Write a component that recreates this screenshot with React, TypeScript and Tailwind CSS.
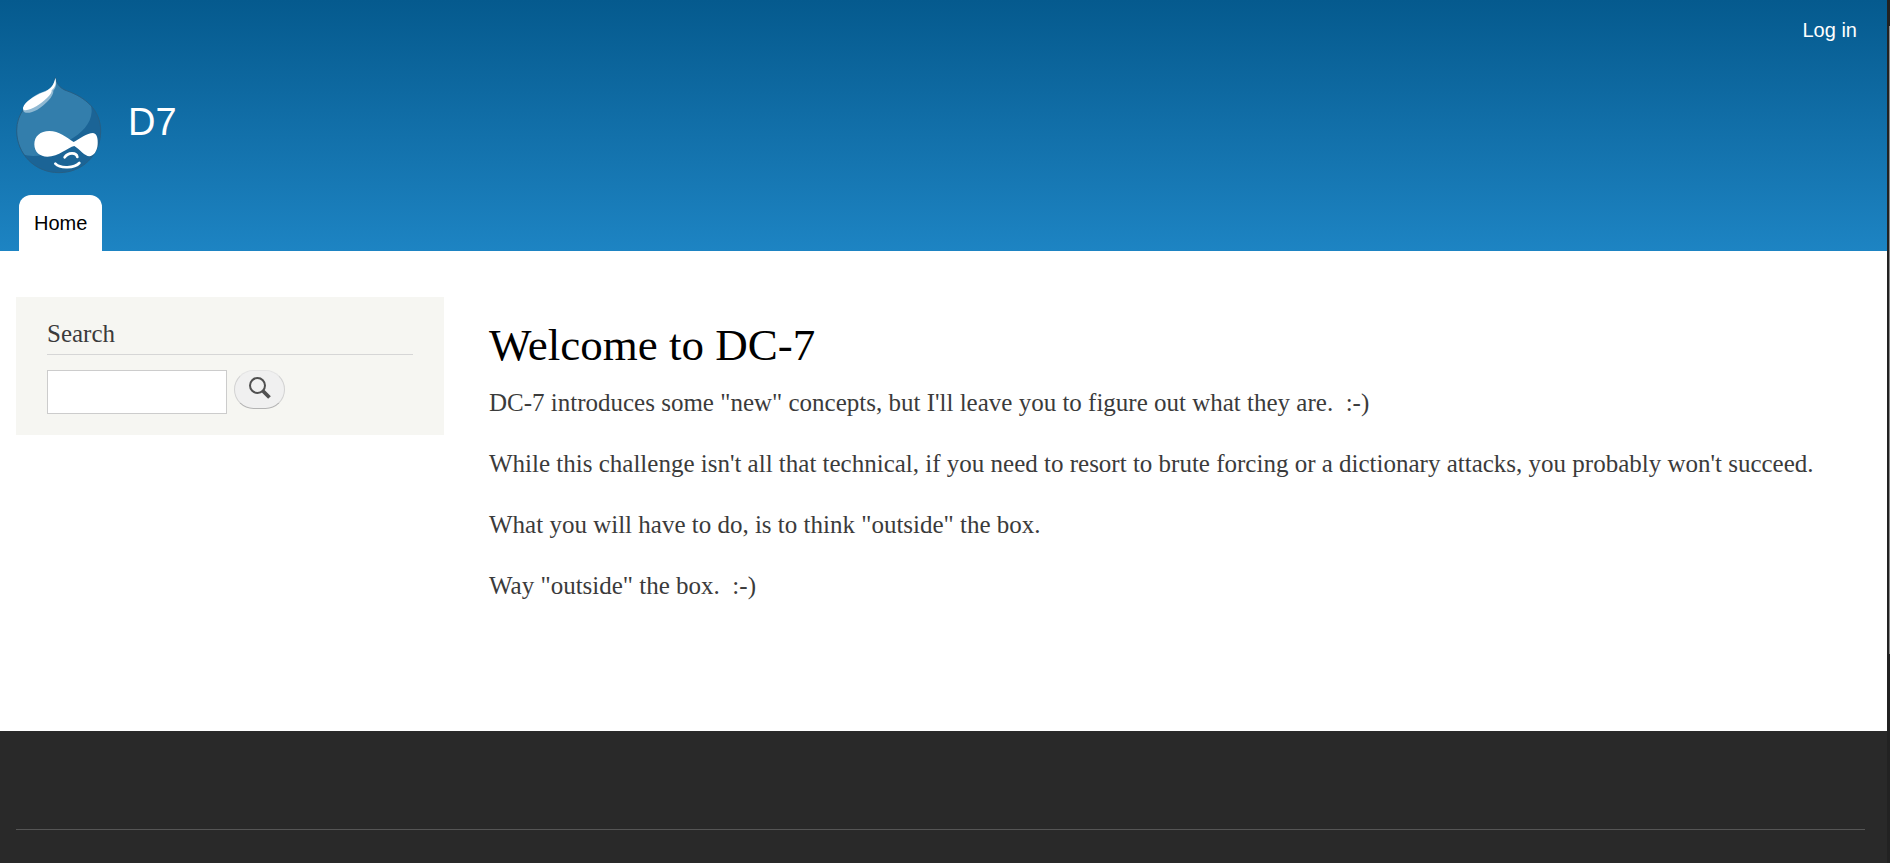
import React from "react";

const paragraphs = [
  "DC-7 introduces some \"new\" concepts, but I'll leave you to figure out what they are.\u00a0 :-)",
  "While this challenge isn't all that technical, if you need to resort to brute forcing or a dictionary attacks, you probably won't succeed.",
  "What you will have to do, is to think \"outside\" the box.",
  "Way \"outside\" the box.\u00a0 :-)",
];

function Logo() {
  return (
    <svg viewBox="18 9 258 291" className="h-[97px] w-[86px]" aria-hidden="true">
      <defs>
        <clipPath id="drop">
          <path d="M136 11C141 32 152 44 172 51C226 70 272 108 272 171C272 244 216 296 147 296C75 296 20 240 20 170C20 118 52 86 90 66C116 52 136 42 136 11Z" />
        </clipPath>
      </defs>
      <g clipPath="url(#drop)">
        <rect x="18" y="9" width="258" height="291" fill="#1b6496" />
        <path d="M18 9H200C228 55 246 84 245 113C243 150 214 178 180 197C150 220 110 246 70 246C45 246 30 240 18 220Z" fill="#337eac" />
      </g>
      <path d="M136 11C141 32 152 44 172 51C226 70 272 108 272 171C272 244 216 296 147 296C75 296 20 240 20 170C20 118 52 86 90 66C116 52 136 42 136 11Z" fill="none" stroke="#265f85" strokeWidth="3" />
      <path d="M39 108C43 84 72 63 98 54C120 47 132 35 136 12C142 32 136 44 130 50C132 66 105 93 82 107C62 118 42 121 39 108Z" fill="#8fb9d3" />
      <path d="M39 101C45 83 74 65 100 55C118 48 131 38 136 12C140 32 134 41 125 49C128 60 100 84 79 97C60 109 37 114 39 101Z" fill="#fff" />
      <path d="M118 171C147 171 169 190 191 204C209 194 231 177 249 177C262 178 264 196 263 211C262 232 250 247 238 247C224 246 210 227 193 216C174 220 146 248 112 248C90 248 73 235 73 211C73 187 91 171 118 171Z" fill="#fff" />
      <path d="M164 250C174 235 199 234 202 249M136 269C151 285 194 282 208 267" fill="none" stroke="#fff" strokeWidth="8" strokeLinecap="round" />
    </svg>
  );
}

export default function App() {
  return (
    <div className="flex min-h-screen bg-[#292929]">
      <div className="flex min-w-0 flex-1 flex-col font-['Liberation_Serif',serif] text-[#3b3b3b]">
        <header className="bg-linear-to-b from-[#055a8e] to-[#1d84c3] px-4 font-['Liberation_Sans',sans-serif] text-white">
          <nav className="flex h-[77px] justify-end px-[14px] pt-4" aria-label="User account">
            <a href="#login" className="text-xl leading-7">Log in</a>
          </nav>
          <div className="flex items-center gap-[26px]">
            <a href="#home" aria-label="Home page"><Logo /></a>
            <a href="#home" className="pb-2 text-[38px] leading-[48px]">D7</a>
          </div>
          <nav className="flex px-[3px] pt-[21px]" aria-label="Main">
            <a href="#home" className="rounded-t-xl bg-white px-[15px] py-3 text-xl leading-8 text-black">Home</a>
          </nav>
        </header>
        <main className="flex flex-1 items-start gap-[45px] bg-white px-4 pt-[46px] pb-[120px]">
          <aside className="w-[428px] shrink-0 bg-[#f6f6f2] px-[31px] py-[21px]">
            <h2 className="border-b border-[#d6d6d6] pb-1 text-[25px] leading-8">Search</h2>
            <form role="search" className="mt-[15px] flex items-start gap-[7px]" onSubmit={(e) => e.preventDefault()}>
              <input type="search" aria-label="Search" className="h-11 w-[180px] border border-[#ccc] bg-white px-2" />
              <button type="submit" aria-label="Submit search" className="flex h-[39px] w-[51px] items-start justify-center rounded-full border border-[#e4e4e4] border-x-[#d2d2d2] border-b-[#b4b4b4] bg-[#f0f0f0] pt-[6px]">
                <svg viewBox="0 0 22 22" className="size-[22px]" fill="none" stroke="#505050">
                  <circle cx="8.5" cy="8.5" r="7.5" strokeWidth="2" />
                  <path d="M14 14L20.5 20.5" strokeWidth="3.8" />
                </svg>
              </button>
            </form>
          </aside>
          <article className="min-w-0 flex-1 pt-5">
            <h1 className="text-[45px] leading-[56px] text-black">Welcome to DC-7</h1>
            <div className="mt-[14px] flex flex-col gap-[29px] text-[25px] leading-8">
              {paragraphs.map((p) => <p key={p}>{p}</p>)}
            </div>
          </article>
        </main>
        <footer className="h-[132px] px-4 pt-[98px]">
          <div className="mr-[6px] border-t border-[#555]" />
        </footer>
      </div>
      <div className="flex w-[3px] justify-end bg-[#222] pt-[26px]">
        <div className="h-3/4 w-px bg-[#8a8a8a]" />
      </div>
    </div>
  );
}
